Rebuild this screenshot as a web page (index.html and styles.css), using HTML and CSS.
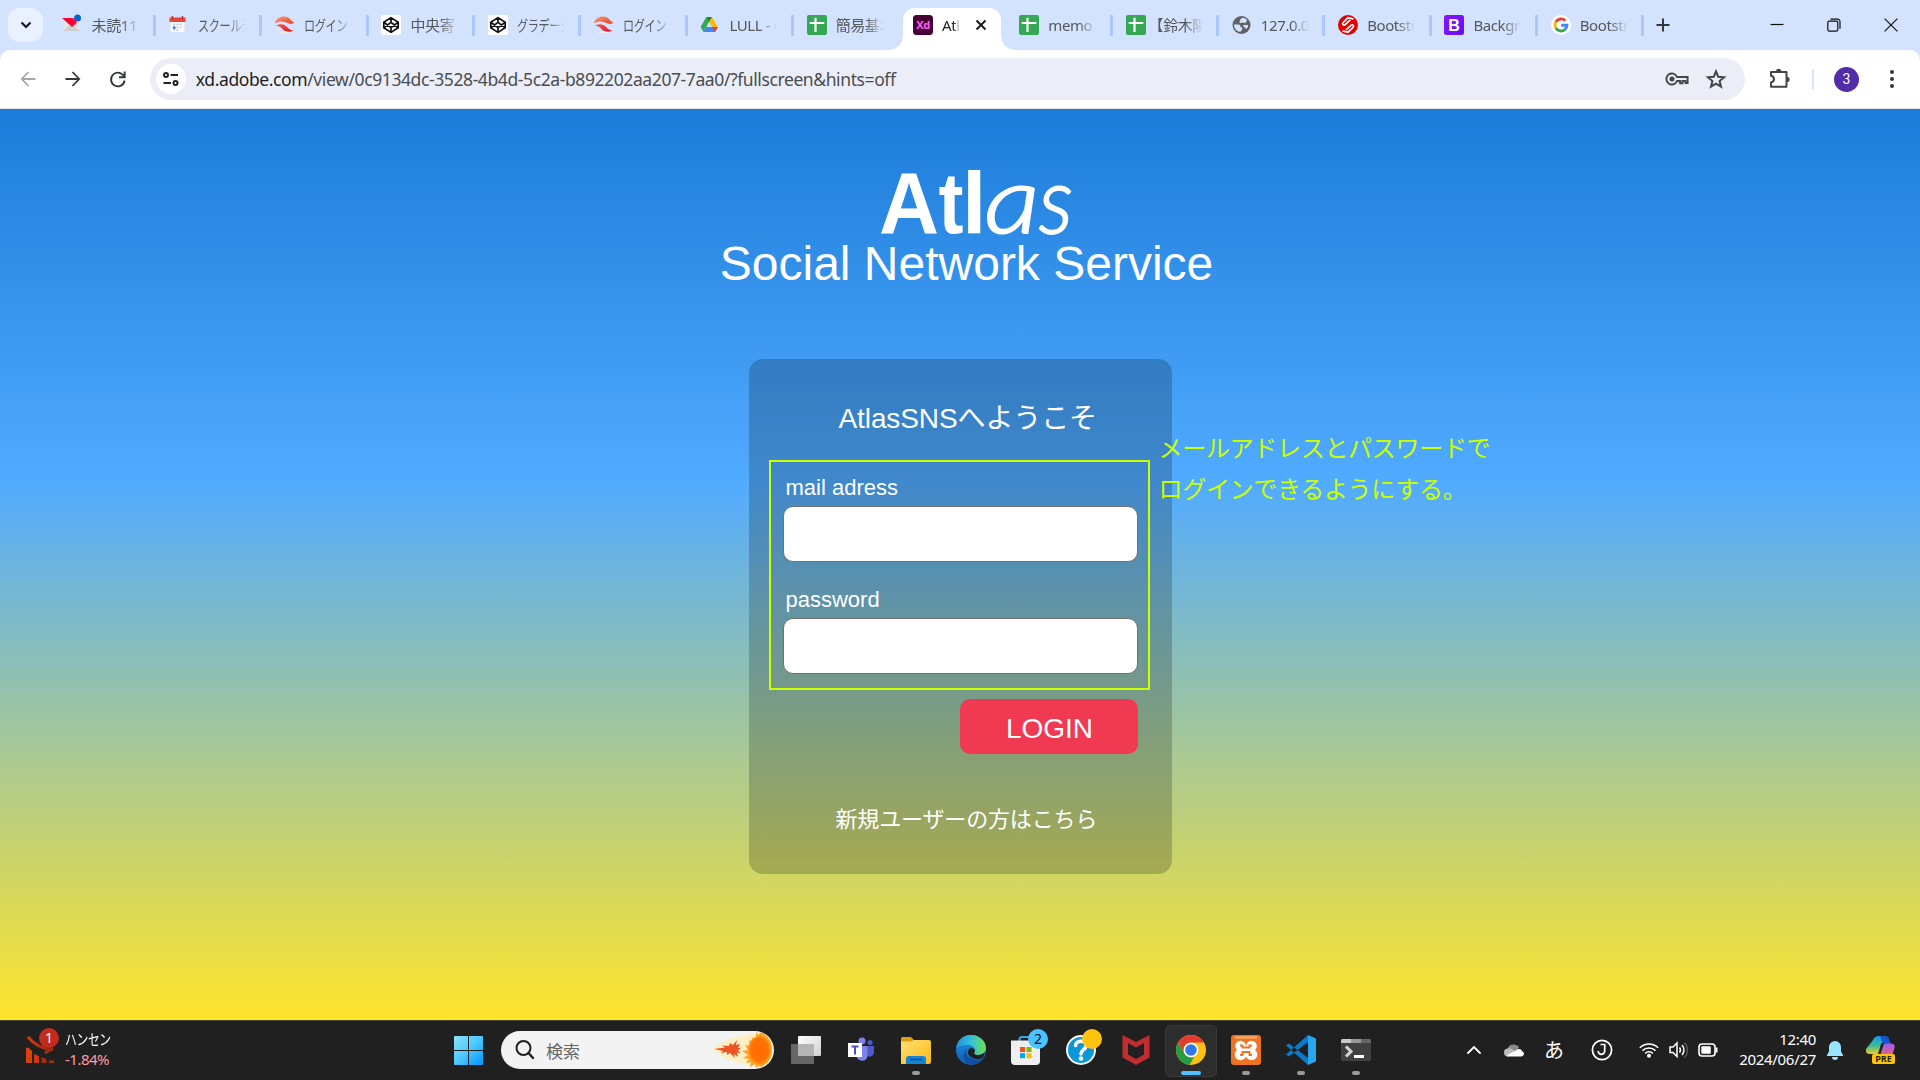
FILE: index.html
```html
<!DOCTYPE html>
<html lang="ja">
<head>
<meta charset="utf-8">
<title>Atlas</title>
<link rel="stylesheet" href="styles.css">
</head>
<body>
<svg width="0" height="0" class="defs">
  <defs>
    <linearGradient id="win" x1="0" y1="0" x2="1" y2="1"><stop offset="0" stop-color="#8be3ff"/><stop offset=".5" stop-color="#4cc8ff"/><stop offset="1" stop-color="#0095ff"/></linearGradient>
    <linearGradient id="sushi" x1="0" y1="0" x2="1" y2="1"><stop offset="0" stop-color="#ff9a73"/><stop offset="1" stop-color="#e33f22"/></linearGradient>
    <linearGradient id="sushi2" x1="0" y1="0" x2="1" y2="1"><stop offset="0" stop-color="#ff5a4d"/><stop offset="1" stop-color="#d91526"/></linearGradient>
    <linearGradient id="boot" x1="0" y1="0" x2="1" y2="1"><stop offset="0" stop-color="#9013fb"/><stop offset="1" stop-color="#6110f2"/></linearGradient>
    <linearGradient id="edgeA" x1="0" y1="0" x2="1" y2="0"><stop offset="0" stop-color="#1b8fd8"/><stop offset=".5" stop-color="#34c1d8"/><stop offset="1" stop-color="#6de04f"/></linearGradient>
    <linearGradient id="edgeB" x1="0" y1="0" x2="0" y2="1"><stop offset="0" stop-color="#1e93dd"/><stop offset="1" stop-color="#0f5cb4"/></linearGradient>
    <linearGradient id="folder" x1="0" y1="0" x2="1" y2="1"><stop offset="0" stop-color="#ffe072"/><stop offset="1" stop-color="#fbb917"/></linearGradient>
    <linearGradient id="task1" x1="0" y1="0" x2="1" y2="1"><stop offset="0" stop-color="#fff"/><stop offset="1" stop-color="#cfcfcf"/></linearGradient>
    <radialGradient id="sun"><stop offset="0" stop-color="#ff6a00"/><stop offset=".75" stop-color="#ff7206"/><stop offset="1" stop-color="#ff9f1c"/></radialGradient>
    <linearGradient id="cpA" x1="0" y1="0" x2="0" y2="1"><stop offset="0" stop-color="#1899ee"/><stop offset=".5" stop-color="#35b79c"/><stop offset="1" stop-color="#e8cf2c"/></linearGradient>
    <linearGradient id="cpB" x1="0" y1="0" x2="0" y2="1"><stop offset="0" stop-color="#9b5ff0"/><stop offset="1" stop-color="#f0607c"/></linearGradient>
    <linearGradient id="stock" x1="0" y1="0" x2="1" y2="0"><stop offset="0" stop-color="#dc3a0c"/><stop offset="1" stop-color="#8c2310"/></linearGradient>

    <symbol id="i-codepen" viewBox="0 0 20 20"><rect width="20" height="20" rx="2" fill="#fff"/><path d="M10 2.600l7.200 4.600v5.600L10 17.400l-7.200-4.600V7.200zM10 2.600v4.800M10 12.600v4.800M2.800 7.200L10 12.600l7.200-5.400M2.800 12.800L10 7.400l7.200 5.400" fill="none" stroke="#111" stroke-width="1.700" stroke-linejoin="round"/></symbol>
    <symbol id="i-sushi" viewBox="0 0 20 20"><path d="M3 17l3 1.500 9-.8 2-2z" fill="#eee"/><path d="M0 8.200C2 1.500 10-.5 15 4c2 2.500 3 3 4.500 4-3 1.300-6 .6-9-.8C6 5.800 4 6.500 0 8.200z" fill="url(#sushi)"/><path d="M1 10.500c5-2.500 9-1 11 1.500 2 2.200 4 3.500 6.500 3.500-4 2.500-9 1-10.500-1-2-2.500-4-3.500-7-4z" fill="url(#sushi2)"/></symbol>
    <symbol id="i-sheet" viewBox="0 0 20 20"><rect width="20" height="20" rx="2" fill="#34a853"/><path d="M8.500 2.700V17M2.700 8h14.600" stroke="#fff" stroke-width="2.200"/></symbol>
  </defs>
</svg>

<header class="tabstrip">
  <div class="tab-search"><svg width="12" height="8" viewBox="0 0 12 8"><path d="M1.500 1.500L6 6l4.500-4.500" fill="none" stroke="#15171a" stroke-width="2.200"/></svg></div>
  <nav class="tabs">
    <div class="tab"><svg class="fav" viewBox="0 0 20 20"><path d="M0 3h17v13H0z" fill="#e4e4e6"/><path d="M0 16l8-7 9 7z" fill="#cfcfd2"/><path d="M-1 3h11l4 4.500-5 4.500z" fill="#ff0033"/><circle cx="14.500" cy="3" r="3.500" fill="#0a63d0"/></svg><span class="label">未読11件</span></div>
    <div class="tab"><svg class="fav" viewBox="0 0 20 20"><rect x="1.500" y="4" width="14" height="13" rx="1" fill="#f7f8fa"/><path d="M.5 2.500h16V7H.5z" fill="#e2473a"/><path d="M3.500 1v3M13.500 1v3" stroke="#b5372d" stroke-width="1.500"/><path d="M4 9.500h9M4 12.500h9M4 15.300h6" stroke="#c8cdd6" stroke-width="1.600" stroke-dasharray="2 1.300"/><rect x="4" y="11.500" width="2.500" height="2.500" fill="#2c7be0"/></svg><span class="label"><span class="kana">スクールデ</span></span></div>
    <div class="tab"><svg class="fav"><use href="#i-sushi"/></svg><span class="label"><span class="kana">ログイン</span></span></div>
    <div class="tab"><svg class="fav"><use href="#i-codepen"/></svg><span class="label">中央寄せ</span></div>
    <div class="tab"><svg class="fav"><use href="#i-codepen"/></svg><span class="label"><span class="kana">グラデーシ</span></span></div>
    <div class="tab"><svg class="fav"><use href="#i-sushi"/></svg><span class="label"><span class="kana">ログイン</span></span></div>
    <div class="tab"><svg class="fav" viewBox="0 0 20 20"><path d="M6.300 2L.6 12l2.800 5L9 7z" fill="#34a853"/><path d="M6.300 2h5.600l6 10.300h-5.700L6.300 2z" fill="#fbbc04"/><path d="M3.400 17l2.900-4.900h11.600L15.100 17z" fill="#4285f4"/><path d="M15.100 17l2.800-4.900h-5.600z" fill="#ea4335"/><path d="M6.300 2h5.600L9 7z" fill="#188038"/></svg><span class="label">LULL - G</span></div>
    <div class="tab no-sep"><svg class="fav"><use href="#i-sheet"/></svg><span class="label">簡易基本</span></div>
    <div class="tab active"><svg class="fav" viewBox="0 0 20 20"><rect width="20" height="20" rx="3.500" fill="#470137"/><text x="10" y="14" text-anchor="middle" class="xd">Xd</text></svg><span class="label short">Atlas</span><svg class="close" width="12" height="12" viewBox="0 0 12 12"><path d="M1.500 1.500l9 9M10.500 1.500l-9 9" stroke="#1c1c1c" stroke-width="2"/></svg></div>
    <div class="tab"><svg class="fav"><use href="#i-sheet"/></svg><span class="label">memo -</span></div>
    <div class="tab"><svg class="fav"><use href="#i-sheet"/></svg><span class="label bracket">【鈴木陽</span></div>
    <div class="tab"><svg class="fav" viewBox="0 0 20 20"><circle cx="9.500" cy="10" r="9" fill="#5f6368"/><path d="M2 9.500h4.500c1.500 0 2 1.200 2 2.500 2.500 0 2 2.500.5 4.500C5 17.500 2 13.500 2 9.500zM9 3.500c1.500-1 4.500-.5 6 1.500L13.500 8 10 7.500c-1 1.200-2.500.5-2.500-1zM11 10h5c.5 1.500-.5 3-2 4-.5-1.500-2.500-1.500-3-4z" fill="#d3e2fd"/></svg><span class="label">127.0.0.1</span></div>
    <div class="tab"><svg class="fav" viewBox="0 0 20 20"><circle cx="10" cy="10" r="10" fill="#e60000"/><path d="M15.500 4L10 2.800 5.200 7.500c-1.500 1.500.5 3.700 2 2.200l5-4.700M4.500 16l5.500 1.200 5-4.700c1.500-1.600-.5-3.700-2-2.200L8 15" fill="none" stroke="#fff" stroke-width="1.700"/></svg><span class="label">Bootstrap</span></div>
    <div class="tab"><svg class="fav" viewBox="0 0 20 20"><rect width="20" height="20" rx="2.500" fill="url(#boot)"/><text x="10" y="16" text-anchor="middle" class="bs">B</text></svg><span class="label">Backgrou</span></div>
    <div class="tab"><svg class="fav" viewBox="0 0 20 20"><circle cx="10" cy="10" r="10" fill="#fff"/><g fill="none" stroke-width="2.900"><path d="M14.300 5.700A6 6 0 0 0 4.800 7" stroke="#ea4335"/><path d="M4.800 7a6 6 0 0 0 0 6" stroke="#fbbc05"/><path d="M4.800 13a6 6 0 0 0 9 1.600" stroke="#34a853"/><path d="M13.800 14.600A6 6 0 0 0 16 10.200H10.200" stroke="#4285f4"/></g></svg><span class="label">Bootstrap</span></div>
  </nav>
  <svg class="new-tab" width="14" height="14" viewBox="0 0 14 14"><path d="M7 .5v13M.5 7h13" stroke="#33363a" stroke-width="2"/></svg>
  <div class="win-controls">
    <svg width="14" height="14" viewBox="0 0 14 14"><path d="M.5 6.500h13" stroke="#111" stroke-width="1.200"/></svg>
    <svg width="14" height="14" viewBox="0 0 14 14"><rect x=".8" y="3.200" width="10" height="10" rx="1.600" fill="none" stroke="#111" stroke-width="1.200"/><path d="M3.500 1.200h7a2.500 2.500 0 0 1 2.500 2.500v7" fill="none" stroke="#111" stroke-width="1.200"/></svg>
    <svg width="14" height="14" viewBox="0 0 14 14"><path d="M.6.6l12.800 12.800M13.400.6L.6 13.400" stroke="#111" stroke-width="1.200"/></svg>
  </div>
</header>

<div class="toolbar-wrap"><div class="toolbar">
  <div class="nav-buttons">
    <svg width="16" height="16" viewBox="0 0 16 16"><path d="M15.500 8H2M8.500 1L1.800 8l6.700 7" fill="none" stroke="#a5a7aa" stroke-width="1.800"/></svg>
    <svg width="16" height="16" viewBox="0 0 16 16"><path d="M.5 8H14M7.500 1l6.700 7-6.700 7" fill="none" stroke="#35383b" stroke-width="1.800"/></svg>
    <svg width="16" height="16" viewBox="0 0 16 16"><path d="M14.200 6A6.800 6.800 0 1 0 14.600 9.500M14.700.5V6.300H9" fill="none" stroke="#35383b" stroke-width="1.900"/></svg>
  </div>
  <div class="omnibox">
    <div class="site-info"><svg width="16" height="14" viewBox="0 0 16 14"><g fill="none" stroke="#222" stroke-width="2"><circle cx="3" cy="3" r="2"/><path d="M7.500 3H15M.5 11H8"/><circle cx="12.500" cy="11" r="2"/></g></svg></div>
    <div class="url"><b>xd.adobe.com</b>/view/0c9134dc-3528-4b4d-5c2a-b892202aa207-7aa0/?fullscreen&amp;hints=off</div>
    <svg class="key" width="24" height="14" viewBox="0 0 24 14"><path d="M12 5h10.600v6h-2.100V9h-3v2.200h-2.400V9H12a5.500 5.500 0 1 1 0-4z" fill="none" stroke="#44474a" stroke-width="1.900"/><circle cx="7" cy="7" r="2.500" fill="#44474a"/></svg>
    <svg class="star" width="20" height="20" viewBox="0 0 20 20"><path d="M10 2.300l2.200 5.400 5.900.5-4.500 3.800 1.400 5.700-5-3.100-5 3.100L6.400 12 1.900 8.200l5.900-.5z" fill="none" stroke="#44474a" stroke-width="2"/></svg>
  </div>
  <svg class="puzzle" width="22" height="22" viewBox="0 0 22 22"><path d="M2 4h15.500v14.800H2v-4.300c4-.8 4-6 0-6.800z" fill="none" stroke="#44474a" stroke-width="2" stroke-linejoin="round"/><path d="M7 3.500a2.700 2.700 0 0 1 5.400 0M18 8.800a2.600 2.600 0 0 1 0 5.200" fill="#44474a"/></svg>
  <span class="divider"></span>
  <span class="avatar">3</span>
  <svg class="menu" width="4" height="20" viewBox="0 0 4 20"><g fill="#35383b"><circle cx="2" cy="3" r="2"/><circle cx="2" cy="10" r="2"/><circle cx="2" cy="17" r="2"/></g></svg>
</div></div>

<main class="page">
  <svg class="logo" width="200" height="80" viewBox="0 0 200 80">
    <text class="logo-bold" x="-1" y="65" textLength="60" lengthAdjust="spacingAndGlyphs">A</text>
    <text class="logo-bold" x="58.500" y="65" textLength="25" lengthAdjust="spacingAndGlyphs">t</text>
    <text class="logo-bold" x="82" y="65">l</text>
    <text class="logo-light" x="104.500" y="65" textLength="55" lengthAdjust="spacingAndGlyphs">a</text>
    <text class="logo-light" x="159" y="65" textLength="34" lengthAdjust="spacingAndGlyphs">s</text>
  </svg>
  <h1 class="subtitle">Social Network Service</h1>
  <section class="card">
    <h2 class="welcome">AtlasSNSへようこそ</h2>
    <div class="fields">
      <label for="mail">mail adress</label>
      <input id="mail" type="text">
      <label for="pass">password</label>
      <input id="pass" type="password">
    </div>
    <button class="login">LOGIN</button>
    <a class="register">新規ユーザーの方はこちら</a>
    <p class="note">メールアドレスとパスワードで<br>ログインできるようにする。</p>
  </section>
</main>

<footer class="taskbar">
  <div class="widget">
    <div class="widget-icon">
      <svg width="30" height="30" viewBox="0 0 30 30"><path d="M2 2c5 6 13 12 25 13" fill="none" stroke="url(#stock)" stroke-width="3"/><path d="M27 13l-8 5" stroke="#a8290f" stroke-width="3"/><path d="M0 13l2.500-.5L6 16v12H0z" fill="#d9400f"/><path d="M8 19l5 2v7H8z" fill="#cf380f"/><path d="M15.500 22l5 2v4h-5z" fill="#a62c10"/><path d="M23 25.500h5V28h-5z" fill="#a62c10"/></svg>
      <span class="badge red">1</span>
    </div>
    <div class="widget-text"><span class="up"><span class="kana">ハンセン</span></span><span class="down">-1.84%</span></div>
  </div>
  <svg class="start" width="29" height="29" viewBox="0 0 29 29"><path d="M1 0h13v14H0V1a1 1 0 0 1 1-1zM15 0h13a1 1 0 0 1 1 1v13H15zM0 15h14v14H1a1 1 0 0 1-1-1zM15 15h14v13a1 1 0 0 1-1 1H15z" fill="url(#win)"/></svg>
  <div class="search">
    <svg width="20" height="20" viewBox="0 0 20 20"><circle cx="8.500" cy="8" r="7" fill="none" stroke="#1d2226" stroke-width="2"/><path d="M13.500 13l4.500 5" stroke="#1d2226" stroke-width="2.400" stroke-linecap="round"/></svg>
    <span>検索</span>
    <svg class="comet" width="60" height="36" viewBox="0 0 60 36"><path d="M0 17C15 4 35 3 45 1v32C30 33 12 28 0 17z" fill="#ffedae" opacity=".7"/><path d="M2 17l11-1.500-3-2 7 .5 1-3 3 2 4-5-1 5 4-1-2 4h3l-3 2.500 3 3-4-1 1 4.500-4-3 1 4-5-5-3 2v-3l-6 1 2-2-4-1z" fill="#ed5526"/><path d="M44 0l2 3 3-3 3 2q8 5 8 16t-8 15l-2 2-4-1-2 2-1-4-5 3 1-5-5 1 3-4-6-1 5-3-6-4 6-1-3-5 5 1-1-6 4 2-1-5 4 3z" fill="#ffa31a"/><path d="M49 3q10 5 10 15T49 33q-13-3-13-15T49 3z" fill="url(#sun)"/></svg>
  </div>
  <div class="apps">
    <div class="app"><svg width="30" height="30" viewBox="0 0 30 30"><rect x="7" y="1" width="23" height="20" rx="1" fill="url(#task1)"/><rect x="0" y="9" width="23" height="20" rx="1" fill="#666"/><path d="M7 9h16v12H7z" fill="#b4b4b4"/></svg></div>
    <div class="app"><svg width="30" height="30" viewBox="0 0 30 30"><circle cx="16" cy="6" r="3.500" fill="#7b83eb"/><circle cx="24" cy="7.500" r="2.500" fill="#5059c9"/><path d="M19 11h9v6c0 5-6 6-8 3z" fill="#5059c9"/><path d="M10 11h11.500v9.500c0 7-10 7-11.500 0z" fill="#7b83eb"/><rect x="2" y="8" width="14" height="14" fill="#fff"/><path d="M5.500 11.500h7M9 11.500v8" stroke="#4b53bc" stroke-width="2"/></svg></div>
    <div class="app run"><svg width="30" height="30" viewBox="0 0 30 30"><path d="M0 3.500Q0 2 1.500 2H10l3 3h15v6H0z" fill="#e0a00c"/><path d="M0 6.500h10L13 5h15q2 0 2 2v20q0 2-2 2H0z" fill="url(#folder)"/><path d="M5 29v-5q0-3 3-3h14q3 0 3 3v5z" fill="#1684d6"/><path d="M9 24.500h12" stroke="#0b4e91" stroke-width="1.600"/></svg></div>
    <div class="app"><svg width="30" height="30" viewBox="0 0 30 30"><circle cx="15" cy="15" r="15" fill="url(#edgeB)"/><path d="M0 14C1 5 7 0 15 0c9 0 15 6.500 15 13 0 4-3.500 7-8 7-3.500 0-4.500-1-4-2 3-4-1-8-6-8C7 10 2 11 0 14z" fill="url(#edgeA)"/><path d="M18.500 17.500c-1 1.500.5 2.500 3.500 2.500 3 0 5-1 6.800-3-.3 3-1 4.500-2 6-3 1.500-7 1.500-10 0-5-2-6.500-7-3-9.500 3-1 6.500 1 4.700 4z" fill="#202020"/><path d="M11 14c-3 7 3 11 9 11 3 0 5-1 8-2.500C25 28 19 30.500 13 29 7 27 6 18 11 14z" fill="#124f9c"/></svg></div>
    <div class="app"><svg width="30" height="30" viewBox="0 0 30 30"><path d="M8.500 8V4.500Q8.500 2 11 2h8q2.500 0 2.500 2.500V8" fill="none" stroke="#2ea9e8" stroke-width="2"/><path d="M0 5.500h29V26q0 4-4 4H4q-4 0-4-4z" fill="#efefef"/><path d="M9 12h5v5H9z" fill="#f25022"/><path d="M15.500 12h5v5h-5z" fill="#7fba00"/><path d="M9 18.200h5v5H9z" fill="#00a4ef"/><path d="M15.500 18.200h5v5h-5z" fill="#ffb900"/></svg><span class="badge blue">2</span></div>
    <div class="app"><svg width="30" height="30" viewBox="0 0 30 30"><circle cx="15" cy="15" r="14" fill="#0a98d8" stroke="#f5f5f5" stroke-width="2"/><path d="M9.500 10.500C10 4.500 20.500 5 20 11c-.3 3.500-5 4-5 8" fill="none" stroke="#fff" stroke-width="3.500" stroke-linecap="round"/><circle cx="15" cy="23.500" r="2.300" fill="#fff"/></svg><span class="badge yellow"></span></div>
    <div class="app"><svg width="30" height="30" viewBox="0 0 30 30"><path d="M1.500 0l13.500 7L28.500 0v22.500L15 30 1.500 22.500zM7 8v11.500l8 4.500 8-4.500V8l-8 4.500z" fill="#c02c2f" fill-rule="evenodd"/></svg></div>
    <div class="app run current"><svg width="30" height="30" viewBox="0 0 30 30"><circle cx="15" cy="15" r="15" fill="#fbc116"/><path d="M2 7.500A15 15 0 0 1 28 7.500H15A7.500 7.500 0 0 0 8.500 18.700z" fill="#e33b2e"/><path d="M2 7.500L8.500 18.700A7.500 7.500 0 0 0 18 21.900L13.600 30A15 15 0 0 1 2 7.500z" fill="#2a9a47"/><circle cx="15" cy="15" r="7.300" fill="#fff"/><circle cx="15" cy="15" r="5.800" fill="#2f78ec"/></svg></div>
    <div class="app run"><svg width="30" height="30" viewBox="0 0 30 30"><rect width="30" height="30" rx="3" fill="#ee7423"/><path d="M4 2.500h22" stroke="#f9b27e" stroke-width="2"/><g fill="#fff"><circle cx="9.500" cy="11" r="5.300"/><circle cx="20.500" cy="11" r="5.300"/><circle cx="9.500" cy="19.500" r="5.800"/><circle cx="20.500" cy="19.500" r="5.800"/><path d="M10 11h10v8H10z"/></g><path d="M9 10.500h2.500v2h7v-2H21M9 20h2.500v-3h7v3H21" fill="none" stroke="#ee7423" stroke-width="2"/></svg></div>
    <div class="app run"><svg width="30" height="30" viewBox="0 0 30 30"><path d="M0 10.500l3-2L22 23v7zM0 19.500l3 2L22 7V0z" fill="#0a7bc8"/><path d="M22 0l8 3.500v23L22 30z" fill="#27a5ef"/></svg></div>
    <div class="app run"><svg width="30" height="30" viewBox="0 0 30 30"><rect y="4" width="30" height="22" rx="2" fill="#414141"/><path d="M0 8V5.500Q0 4 1.500 4H10v4z" fill="#c9c9c9"/><path d="M10 4h10v4H10z" fill="#999"/><path d="M20 4h8.500Q30 4 30 5.500V8H20z" fill="#666"/><path d="M5 11.500l5 5-5 5" fill="none" stroke="#d5d5d5" stroke-width="3"/><path d="M13 21.500h10" stroke="#fff" stroke-width="3"/></svg></div>
  </div>
  <div class="tray">
    <div class="t40"><svg width="14" height="8" viewBox="0 0 14 8"><path d="M1 7l6-6 6 6" fill="none" stroke="#fff" stroke-width="1.800" stroke-linecap="round"/></svg></div>
    <div class="t40"><svg width="20" height="14" viewBox="0 0 20 14"><path d="M4 5a6 5 0 0 1 11-1L12 9H2z" fill="#8b8b8b"/><path d="M4 13.500a4 4 0 0 1 0-8c3-1 6 2 8 4z" fill="#bdbdbd"/><path d="M3 13.500c1-3 6-4 9-6 3-3 6-1 6 .8 3 1 2.500 5.200-1 5.200z" fill="#fff"/></svg></div>
    <div class="t40 ime">あ</div>
    <div class="t56"><svg width="22" height="22" viewBox="0 0 22 22"><g fill="none" stroke="#fff" stroke-width="1.700"><circle cx="11" cy="11" r="9.600"/><path d="M9.500 5.500h4.200V12a3.300 3.300 0 0 1-6.600 0"/></g></svg></div>
    <div class="t38"><svg width="20" height="16" viewBox="0 0 20 16"><g fill="none" stroke="#fff" stroke-width="1.500"><path d="M.8 5.800a13 13 0 0 1 18.400 0M3.500 8.600a9.200 9.200 0 0 1 13 0M6.200 11.400a5.400 5.400 0 0 1 7.600 0"/></g><circle cx="10" cy="13.800" r="2" fill="#fff"/></svg></div>
    <div class="t22"><svg width="21" height="18" viewBox="0 0 21 18"><g fill="none" stroke="#fff" stroke-width="1.500"><path d="M1 6h3l4-4v13.500l-4-4H1zM10.500 6.500a4 4 0 0 1 0 5M13 4a7.500 7.500 0 0 1 0 10"/><path d="M15.500 1.500a11 11 0 0 1 0 15" stroke="#555"/></g></svg></div>
    <div class="t37"><svg width="21" height="14" viewBox="0 0 21 14"><rect x="1" y="1" width="16" height="12" rx="3" fill="none" stroke="#fff" stroke-width="1.600"/><rect x="3.300" y="3.300" width="9.500" height="7.400" rx="1" fill="#fff"/><path d="M18.500 4.500v5" stroke="#fff" stroke-width="2"/></svg></div>
    <div class="clock"><span>12:40</span><span>2024/06/27</span></div>
    <div class="t38"><svg width="18" height="20" viewBox="0 0 18 20"><path d="M9 1a6 6 0 0 1 6 6v4.500l2 3.500v1H1v-1l2-3.500V7a6 6 0 0 1 6-6zM6 17h6a3 3 0 0 1-6 0z" fill="#97e4ff"/></svg></div>
    <div class="t54"><div class="copilot"><svg width="30" height="30" viewBox="0 0 30 30"><path d="M7 5q1.500-4 6-4h7l-3 5-4 13H4q-5 0-4-5z" fill="url(#cpA)"/><path d="M14 1h5q3.500 0 4.500 4l1 3.500h-8z" fill="#1756cc"/><path d="M18 8.500h7q4.500 0 3.500 4.500l-2.500 8H13z" fill="url(#cpB)"/><path d="M16.500 8.500L13 20" stroke="#202020" stroke-width="2.500"/></svg><span class="pre">PRE</span></div></div>
  </div>
</footer>
</body>
</html>
```

FILE: styles.css
```css
* { box-sizing: border-box; }

body {
  margin: 0;
  width: 1920px;
  height: 1080px;
  overflow: hidden;
  display: flex;
  flex-direction: column;
  font-family: "Noto Sans", "Noto Sans CJK JP", sans-serif;
}

svg { display: block; flex: none; overflow: visible; }
.defs { position: absolute; }

/* Tab strip */
.tabstrip {
  height: 50px;
  flex: none;
  display: flex;
  align-items: flex-start;
  background: #d3e2fd;
}
.tab-search {
  width: 35px;
  height: 34px;
  margin: 8px 9.600px 0 8px;
  border-radius: 12px;
  background: #e9f0fe;
  display: flex;
  align-items: center;
  justify-content: center;
}
.tabs { display: flex; gap: 8px; flex: none; }
.tab {
  position: relative;
  width: 98.300px;
  height: 42px;
  margin-top: 8px;
  padding: 0 10px 8px;
  display: flex;
  align-items: center;
}
.tab::after {
  content: "";
  position: absolute;
  left: 100.500px;
  top: 7px;
  width: 3px;
  height: 21px;
  border-radius: 1px;
  background: #a8c7fa;
}
.tab.no-sep::after { display: none; }
.fav { width: 20px; height: 20px; }
.label {
  margin-left: 9px;
  width: 50px;
  height: 24px;
  line-height: 24px;
  font-size: 15px;
  letter-spacing: -.4px;
  color: #55585d;
  white-space: nowrap;
  overflow: hidden;
  flex: none;
  -webkit-mask-image: linear-gradient(90deg, #000 60%, transparent 96%);
  mask-image: linear-gradient(90deg, #000 60%, transparent 96%);
}
.label.bracket { text-indent: -6px; }
.label.short { width: 19px; color: #1f1f1f; }
.kana { display: inline-block; transform: scaleX(.74); transform-origin: 0 50%; }
.close { margin-left: 14px; }
.tab.active { background: #fff; border-radius: 12px 12px 0 0; }
.tab.active::before,
.tab.active::after {
  content: "";
  position: absolute;
  top: auto;
  bottom: 0;
  width: 14px;
  height: 14px;
  border-radius: 0;
}
.tab.active::before { left: -14px; background: radial-gradient(circle at 0 0, transparent 13.500px, #fff 14px); }
.tab.active::after { left: 98.300px; background: radial-gradient(circle at 100% 0, transparent 13.500px, #fff 14px); }
.xd { font: 700 11px "Open Sans", sans-serif; fill: #ff61f6; letter-spacing: -.5px; }
.bs { font: 700 16px "Liberation Sans", sans-serif; fill: #fff; }
.new-tab { margin: 18px 0 0 17px; }
.win-controls { margin: 18px 22px 0 auto; display: flex; gap: 43px; }

/* Toolbar */
.toolbar-wrap { flex: none; background: #d3e2fd; }
.toolbar {
  height: 59px;
  display: flex;
  align-items: center;
  padding: 0 26px 0 20px;
  background: #fff;
  border-bottom: 1px solid #dfe1e5;
  border-radius: 10px 10px 0 0;
}
.nav-buttons { display: flex; gap: 29px; width: 130px; }
.omnibox {
  width: 1597px;
  height: 42px;
  padding: 0 19px 0 6px;
  display: flex;
  align-items: center;
  border-radius: 21px;
  background: #ebeef7;
}
.site-info {
  width: 30px;
  height: 30px;
  border-radius: 50%;
  background: #fff;
  display: flex;
  align-items: center;
  justify-content: center;
}
.url {
  margin-left: 10px;
  font-size: 17.500px;
  letter-spacing: -.4px;
  color: #4a4d51;
  white-space: nowrap;
}
.url b { font-weight: 400; color: #1f1f1f; }
.key { margin-left: auto; }
.star { margin-left: 17px; }
.puzzle { margin-left: 24px; }
.divider { width: 2px; height: 20px; margin-left: 21px; background: #d3e2fd; }
.avatar {
  width: 25px;
  height: 25px;
  margin-left: 20px;
  border-radius: 50%;
  background: #512da8;
  color: #fff;
  font: 14px/25px "Roboto", sans-serif;
  text-align: center;
}
.menu { margin-left: 31px; }

/* Login page */
.page {
  height: 911px;
  flex: none;
  display: flex;
  flex-direction: column;
  align-items: center;
  color: #fff;
  font-family: "Liberation Sans", "Noto Sans CJK JP", sans-serif;
  background: linear-gradient(#1c7cd9, #51abff 41%, #ffe52b);
}
.logo { margin: 59px 0 0 40px; }
.logo-bold { font: 700 88px "Liberation Sans", sans-serif; fill: #fff; }
.logo-light { font: italic 300 92px "Lato", sans-serif; fill: #fff; stroke: #fff; stroke-width: 2; }
.subtitle {
  margin: -12px 0 0 13px;
  font-size: 48px;
  font-weight: 400;
  line-height: 55px;
}
.card {
  position: relative;
  width: 423px;
  height: 515px;
  margin-top: 68px;
  display: flex;
  flex-direction: column;
  border-radius: 14px;
  background: rgba(0, 0, 0, .2);
}
.welcome {
  margin: 39px 0 0 90px;
  font-size: 28px;
  font-weight: 400;
  line-height: 42px;
  letter-spacing: -.1px;
  white-space: nowrap;
}
.fields {
  width: 381px;
  height: 230px;
  flex: none;
  margin: 20px 0 0 20px;
  padding: 12px 0 0 12px;
  border: 2px solid #cf0;
  display: flex;
  flex-direction: column;
}
.fields label { flex: none; height: 32px; padding-left: 3px; font-size: 22px; line-height: 28px; }
.fields input {
  flex: none;
  width: 355px;
  height: 56px;
  margin: 0 0 24px;
  border: 1px solid #707070;
  border-radius: 10px;
  background: #fff;
}
.fields input:last-child { margin-bottom: 0; }
.login {
  width: 178px;
  height: 55px;
  flex: none;
  margin: 9px 0 0 211px;
  padding: 5px 0 0 2px;
  border: 0;
  border-radius: 10px;
  background: #ef3a51;
  color: #fff;
  font: 28px "Liberation Sans", sans-serif;
}
.register {
  margin: 50px 0 0 87px;
  font-size: 22px;
  line-height: 32px;
  letter-spacing: -.15px;
}
.note {
  position: absolute;
  left: 410px;
  top: 69px;
  margin: 0;
  font-size: 24px;
  line-height: 41px;
  letter-spacing: -.3px;
  color: #cf0;
  white-space: nowrap;
}

/* Taskbar */
.taskbar {
  height: 61px;
  flex: none;
  display: flex;
  align-items: center;
  padding: 0 12px 2px 0;
  background: #202020;
  border-top: 1px solid #45433a;
  color: #fff;
}
.widget { width: 428px; margin-left: 26px; display: flex; align-items: center; }
.widget-icon { position: relative; width: 39px; }
.badge {
  position: absolute;
  width: 20px;
  height: 20px;
  border-radius: 50%;
  font-size: 14px;
  line-height: 20px;
  text-align: center;
}
.badge.red { left: 13px; top: -7px; background: #c42b1f; }
.badge.blue { right: 5px; top: 8px; background: #4cc2ff; color: #111; }
.badge.yellow { right: 6px; top: 8px; background: #ffc20e; }
.widget-text { display: flex; flex-direction: column; margin-top: -2px; font-size: 15px; line-height: 20px; letter-spacing: -.5px; }
.widget-text .kana { transform: scaleX(.79); }
.down { color: #ff99a4; }
.search {
  width: 273px;
  height: 38px;
  margin-left: 18px;
  padding: 0 2px 0 14px;
  display: flex;
  align-items: center;
  border-radius: 19px;
  background: #f3f3f3;
  color: #666;
  font-size: 17px;
}
.search span { margin-left: 11px; }
.comet { margin-left: auto; }
.apps { display: flex; margin-left: 4px; }
.app {
  position: relative;
  width: 55px;
  height: 58px;
  display: flex;
  align-items: center;
  justify-content: center;
}
.app svg { position: relative; }
.app.run::after {
  content: "";
  position: absolute;
  bottom: 4px;
  left: 24px;
  width: 8px;
  height: 4px;
  border-radius: 2px;
  background: #9a9a9a;
}
.app.current::before {
  content: "";
  position: absolute;
  left: 2px;
  top: 4px;
  width: 50px;
  height: 50px;
  border: 1px solid #393939;
  border-radius: 5px;
  background: #2d2d2d;
}
.app.current::after { left: 18px; width: 20px; background: #4cc2ff; }
.tray { margin-left: auto; display: flex; align-items: center; }
.tray > div { display: flex; align-items: center; justify-content: center; }
.t22 { width: 22px; }
.t37 { width: 37px; }
.t38 { width: 38px; }
.t40 { width: 40px; }
.t54 { width: 54px; }
.t56 { width: 56px; }
.ime { font: 400 20px/30px "Noto Sans CJK JP", sans-serif; }
.tray .clock {
  width: 89px;
  flex-direction: column;
  align-items: flex-end;
  margin-top: -2px;
  font-size: 15px;
  line-height: 20px;
  letter-spacing: -.3px;
}
.copilot { position: relative; }
.pre {
  position: absolute;
  left: 6px;
  top: 19px;
  width: 23px;
  height: 10px;
  border-radius: 2px;
  background: #fcc40e;
  color: #222;
  font: 700 9px/10px "Open Sans", sans-serif;
  text-align: center;
}
```
